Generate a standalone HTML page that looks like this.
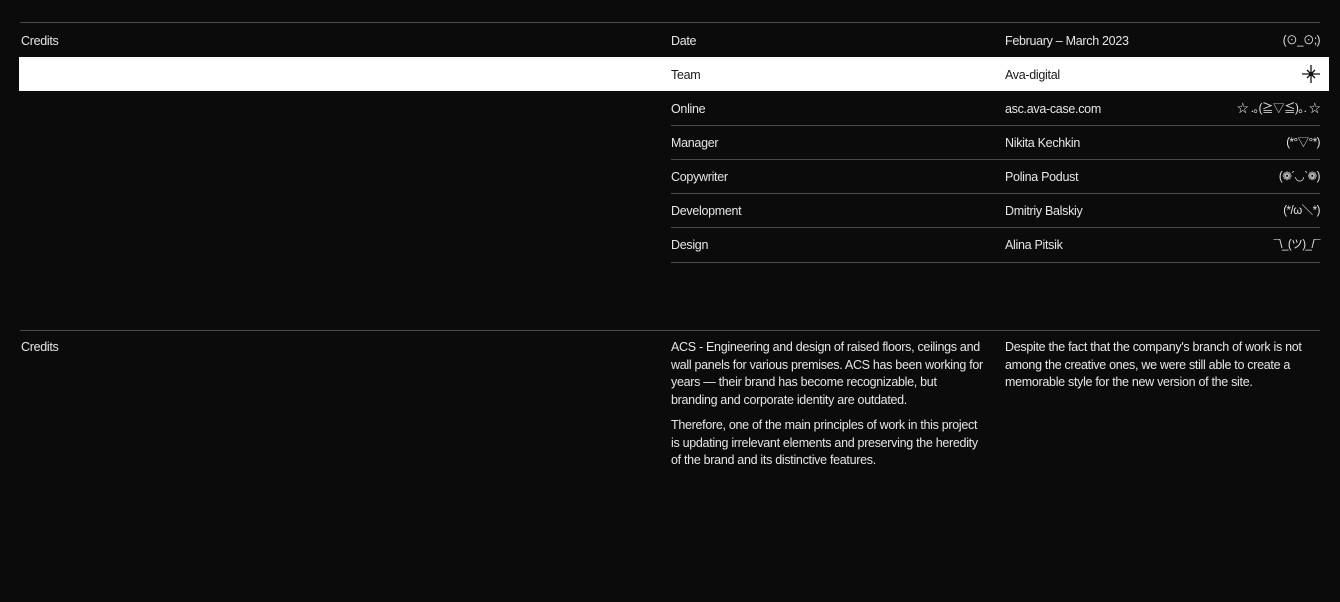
<!DOCTYPE html>
<html><head><meta charset="utf-8"><style>
html,body{margin:0;padding:0;background:#0c0b0b;width:1340px;height:602px;overflow:hidden}
body{position:relative;font-family:"Liberation Sans","Noto Sans CJK JP",sans-serif;font-size:12.5px;color:#e6e6e6;letter-spacing:-0.3px}
.a{position:absolute;white-space:nowrap;line-height:15px}
.l{position:absolute;height:1px;background:#4a4a4a}
.r{text-align:right;right:20px;font-size:11.5px;letter-spacing:-0.5px}
p{margin:0;white-space:nowrap}
</style></head><body>
<div class="l" style="left:20px;width:1300px;top:22px"></div>
<div class="a" style="left:21px;top:34px">Credits</div>
<div class="a" style="left:671px;top:34px">Date</div>
<div class="a" style="left:1005px;top:34px">February – March 2023</div>
<div class="a r" style="top:34px">(⊙_⊙;)</div>

<div style="position:absolute;left:19px;top:57px;width:1310px;height:34px;background:#fff"></div>
<div class="a" style="left:671px;top:68px;color:#1a1a1a">Team</div>
<div class="a" style="left:1005px;top:68px;color:#1a1a1a">Ava-digital</div>
<svg class="a" style="left:1302px;top:65px" width="18" height="18" viewBox="0 0 18 18"><g stroke="#111" stroke-width="1.3"><line x1="9" y1="0" x2="9" y2="18"/><line x1="0" y1="9" x2="18" y2="9"/><line x1="5" y1="5" x2="13" y2="13"/><line x1="13" y1="5" x2="5" y2="13"/></g><circle cx="9" cy="9" r="2" fill="#111"/></svg>

<div class="a" style="left:671px;top:102px">Online</div>
<div class="a" style="left:1005px;top:102px">asc.ava-case.com</div>
<div class="a r" style="top:102px">☆ .｡(≧▽≦)｡. ☆</div>
<div class="l" style="left:671px;width:649px;top:125px"></div>
<div class="a" style="left:671px;top:136px">Manager</div>
<div class="a" style="left:1005px;top:136px">Nikita Kechkin</div>
<div class="a r" style="top:136px">(*°▽°*)</div>
<div class="l" style="left:671px;width:649px;top:159px"></div>
<div class="a" style="left:671px;top:170px">Copywriter</div>
<div class="a" style="left:1005px;top:170px">Polina Podust</div>
<div class="a r" style="top:170px">(❁´◡`❁)</div>
<div class="l" style="left:671px;width:649px;top:193px"></div>
<div class="a" style="left:671px;top:204px">Development</div>
<div class="a" style="left:1005px;top:204px">Dmitriy Balskiy</div>
<div class="a r" style="top:204px">(*/ω＼*)</div>
<div class="l" style="left:671px;width:649px;top:227px"></div>
<div class="a" style="left:671px;top:238px">Design</div>
<div class="a" style="left:1005px;top:238px">Alina Pitsik</div>
<div class="a r" style="top:238px">¯\_(ツ)_/¯</div>
<div class="l" style="left:671px;width:649px;top:262px"></div>

<div class="l" style="left:20px;width:1300px;top:330px"></div>
<div class="a" style="left:21px;top:340px">Credits</div>
<div style="position:absolute;left:671px;top:339px;width:316px;line-height:17.5px">
<p>ACS - Engineering and design of raised floors, ceilings and<br>wall panels for various premises. ACS has been working for<br>years — their brand has become recognizable, but<br>branding and corporate identity are outdated.</p>
<p style="margin-top:8px">Therefore, one of the main principles of work in this project<br>is updating irrelevant elements and preserving the heredity<br>of the brand and its distinctive features.</p>
</div>
<div style="position:absolute;left:1005px;top:339px;width:310px;line-height:17.5px">
<p>Despite the fact that the company's branch of work is not<br>among the creative ones, we were still able to create a<br>memorable style for the new version of the site.</p>
</div>
</body></html>
